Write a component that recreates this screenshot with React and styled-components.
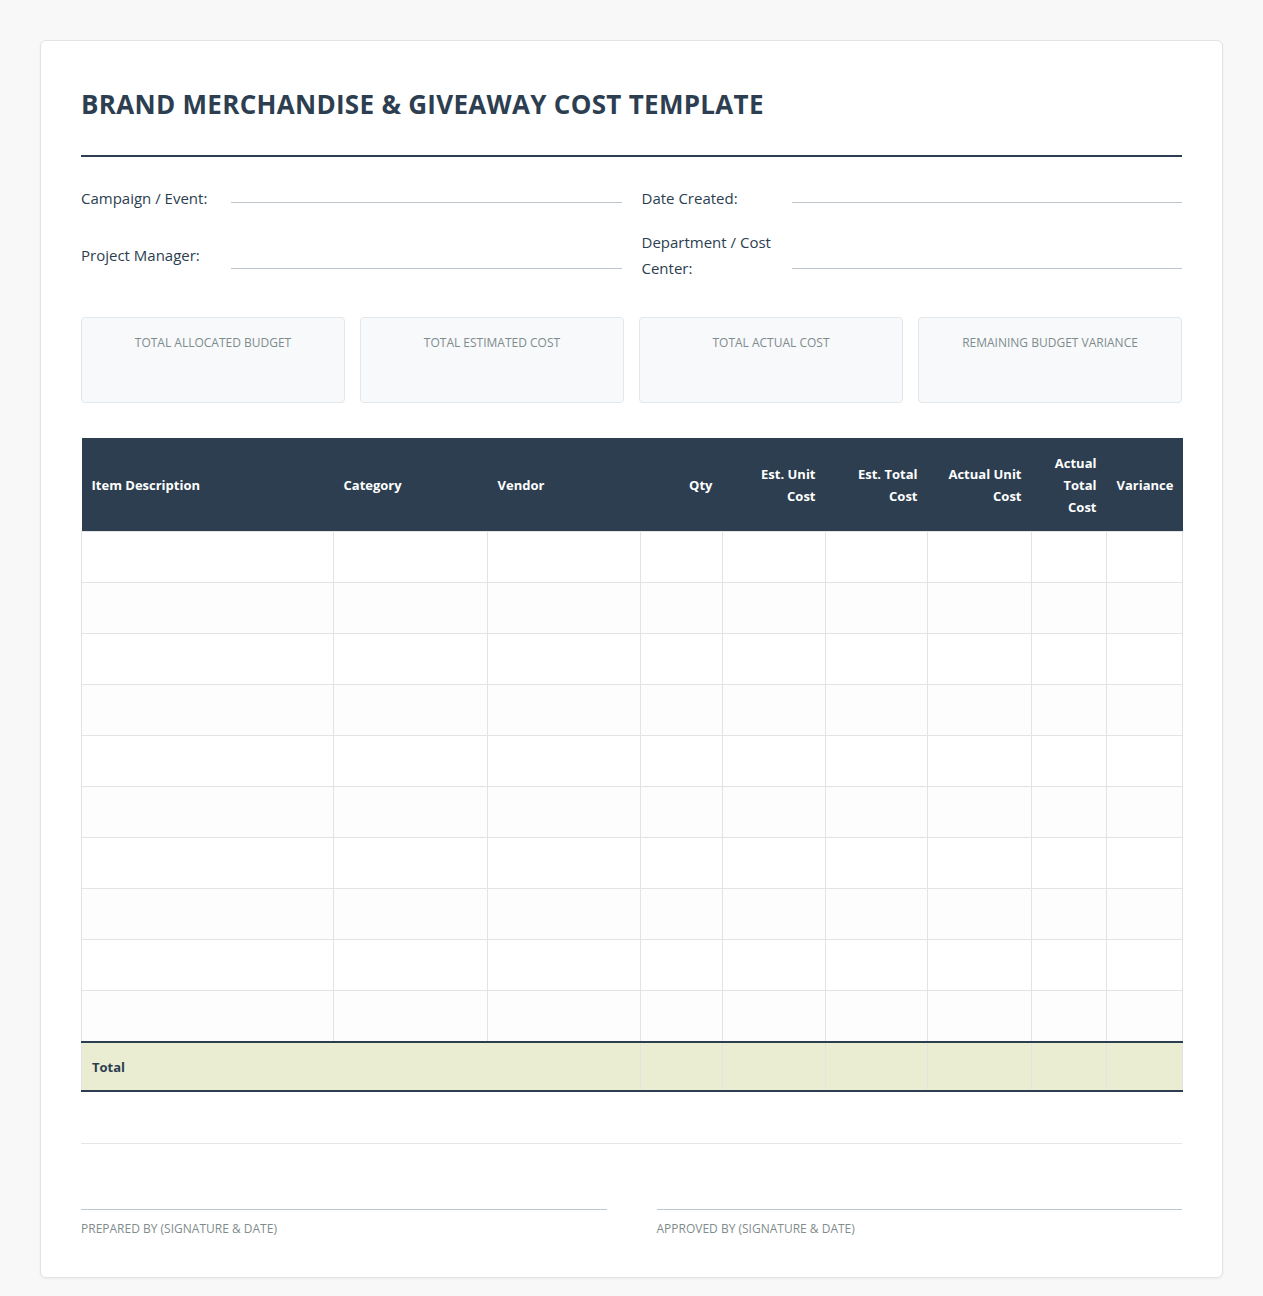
import React from "react";
import styled, { createGlobalStyle } from "styled-components";

const Global = createGlobalStyle`
  body { margin: 0; background: #f8f8f8; font-family: "Open Sans", "Noto Sans", sans-serif; color: #2c3e50; }
`;
const Page = styled.div`padding: 40px 40px 34px 40px;`;
const Card = styled.div`
  background: #fff; border: 1px solid #e3e3e3; border-radius: 6px;
  padding: 40px 40px 40px 40px; box-shadow: 0 1px 3px rgba(0,0,0,0.05);
`;
const Title = styled.h1`
  margin: 0; font-size: 26px; font-weight: 700; letter-spacing: 0.3px; line-height: 46px;
  padding-bottom: 28px; border-bottom: 2px solid #2c3e50; color: #2c3e50;
`;
const Fields = styled.div`
  display: grid; grid-template-columns: 1fr 1fr; column-gap: 20px; row-gap: 18px; margin-top: 28px;
`;
const Field = styled.div`display: flex; align-items: center;`;
const Label = styled.div`width: 150px; flex: none; font-size: 15px; font-weight: 500; line-height: 26px;`;
const Line = styled.div`flex: 1; border-bottom: 1px solid #bfc5cc; align-self: flex-end; margin-bottom: ${p => p.mb || 8}px;`;
const Stats = styled.div`display: grid; grid-template-columns: repeat(4, 1fr); gap: 15px; margin-top: 36px;`;
const Stat = styled.div`
  height: 86px; background: #f7f9fb; border: 1px solid #e2e7ec; border-radius: 4px;
  text-align: center; font-size: 12px; color: #7f8c8d; text-transform: uppercase; padding-top: 16px; box-sizing: border-box;
`;
const Table = styled.table`
  width: 100%; border-collapse: collapse; table-layout: fixed; margin-top: 35px; font-size: 13px;
`;
const Th = styled.th`
  background: #2c3e50; color: #fff; font-weight: 700; height: 93px; padding: 0 10px;
  text-align: ${p => p.$right ? "right" : "left"}; line-height: 22px;
`;
const Td = styled.td`height: 48px; border: 1px solid #e3e3e3; background: ${p => p.$alt ? "#fdfdfd" : "#fff"};`;
const TotalRow = styled.tr`border-top: 2px solid #2c3e50; border-bottom: 2px solid #2c3e50;`;
const TotalTd = styled.td`
  background: #eaedd1; height: 47px; padding: 0 10px; font-weight: 700; font-size: 13px;
  border-left: 1px solid #e3e3e3; border-right: 1px solid #e3e3e3;
`;
const Hr = styled.div`border-top: 1px solid #e5e5e5; margin-top: 51px;`;
const Sigs = styled.div`display: grid; grid-template-columns: 1fr 1fr; gap: 50px; margin-top: 65px;`;
const Sig = styled.div`
  border-top: 1px solid #bfc5cc; padding-top: 10px; font-size: 12px; color: #7f8c8d; text-transform: uppercase;
`;

const cols = [
  ["Item Description", 252], ["Category", 154], ["Vendor", 153], ["Qty", 82, 1],
  ["Est. Unit Cost", 103, 1], ["Est. Total Cost", 102, 1], ["Actual Unit Cost", 104, 1],
  ["Actual Total Cost", 75, 1], ["Variance", 76, 1],
];

export default function App() {
  return (
    <Page>
      <Global />
      <Card>
        <Title>BRAND MERCHANDISE &amp; GIVEAWAY COST TEMPLATE</Title>
        <Fields>
          <Field><Label>Campaign / Event:</Label><Line /></Field>
          <Field><Label>Date Created:</Label><Line /></Field>
          <Field><Label>Project Manager:</Label><Line mb={12} /></Field>
          <Field><Label>Department / Cost Center:</Label><Line mb={12} /></Field>
        </Fields>
        <Stats>
          <Stat>Total Allocated Budget</Stat>
          <Stat>Total Estimated Cost</Stat>
          <Stat>Total Actual Cost</Stat>
          <Stat>Remaining Budget Variance</Stat>
        </Stats>
        <Table>
          <colgroup>{cols.map(c => <col key={c[0]} style={{ width: c[1] }} />)}</colgroup>
          <thead><tr>{cols.map(c => <Th key={c[0]} $right={c[2]}>{c[0]}</Th>)}</tr></thead>
          <tbody>
            {Array.from({ length: 10 }).map((_, i) => (
              <tr key={i}>{cols.map(c => <Td key={c[0]} $alt={i % 2 === 1} />)}</tr>
            ))}
            <TotalRow>
              <TotalTd colSpan={3}>Total</TotalTd>
              {cols.slice(3).map(c => <TotalTd key={c[0]} />)}
            </TotalRow>
          </tbody>
        </Table>
        <Hr />
        <Sigs>
          <Sig>Prepared By (Signature &amp; Date)</Sig>
          <Sig>Approved By (Signature &amp; Date)</Sig>
        </Sigs>
      </Card>
    </Page>
  );
}
